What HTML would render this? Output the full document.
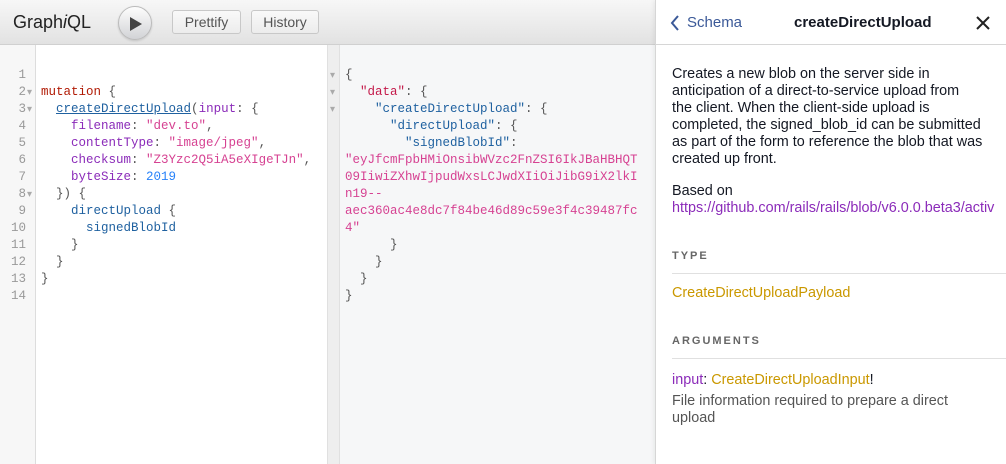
<!DOCTYPE html>
<html><head><meta charset="utf-8"><style>
*{margin:0;padding:0;box-sizing:border-box}
body{width:1006px;height:464px;overflow:hidden;background:#fff;font-family:"Liberation Sans",sans-serif;position:relative}
.top{position:absolute;left:0;top:0;width:655px;height:45px;background:linear-gradient(#f7f7f7,#e2e2e2);border-bottom:1px solid #d0d0d0}
.logo{position:absolute;left:13px;top:12px;font-size:18px;color:#222}
.run{position:absolute;left:118px;top:6px;width:34px;height:34px;border-radius:50%;background:linear-gradient(#fdfdfd,#d2d3d6);border:1px solid #bbb;box-shadow:0 1px 2px rgba(0,0,0,.15)}
.run svg{position:absolute;left:10px;top:9px}
.btn{position:absolute;top:10px;height:24px;border:1px solid #c8c8c8;border-radius:3px;background:linear-gradient(#f9f9f9,#ececec);font-size:14px;color:#555;line-height:22px;text-align:center}
.gut{position:absolute;left:0;top:45px;width:36px;height:419px;background:#f7f7f7;border-right:1px solid #ddd}
.ed{position:absolute;left:36px;top:45px;width:291px;height:419px;background:#fff}
.div{position:absolute;left:327px;top:45px;width:13px;height:419px;background:#eeeeee;border-left:1px solid #e0e0e0;border-right:1px solid #e0e0e0}
.res{position:absolute;left:340px;top:45px;width:315px;height:419px;background:#f6f7f8}
.code{position:absolute;font-family:"Liberation Mono",monospace;font-size:12.5px;line-height:17px;white-space:pre;color:#555}
.ln{color:#999;text-align:right;width:24px}
.k{color:#b11a04}.f{color:#1f61a0}.a{color:#8b2bb9}.s{color:#d64292}.n{color:#2882f9}.d{color:#1f61a0}
.u{text-decoration:underline}
.fold{position:absolute;font-size:10px;line-height:17px;color:#aaa;white-space:pre}
.docs{position:absolute;left:655px;top:0;width:351px;height:464px;background:#fff;border-left:1px solid #d6d6d6;box-shadow:-2px 0 4px rgba(0,0,0,.05)}
.dh{height:45px;border-bottom:1px solid #d6d6d6;position:relative}
.p{position:absolute;left:16px;font-size:14.4px;line-height:17px;color:#141823;white-space:nowrap}
.sec{position:absolute;left:16px;font-size:11px;font-weight:bold;letter-spacing:2px;color:#666}
.hr{position:absolute;left:16px;right:0;height:1px;background:#e0e0e0}
</style></head><body>
<div class="top">
<div class="logo">Graph<i>i</i>QL</div>
<div class="run"><svg width="14" height="16"><path d="M1 1 L13 8 L1 15Z" fill="#444"/></svg></div>
<div class="btn" style="left:172px;width:69px">Prettify</div>
<div class="btn" style="left:251px;width:68px">History</div>
</div>
<div class="gut"></div><div class="ed"></div><div class="div"></div><div class="res"></div>
<div class="code ln" style="left:2px;top:67px">1
2
3
4
5
6
7
8
9
10
11
12
13
14</div>
<div class="fold" style="left:27px;top:67px">
▾
▾




▾</div>
<div class="code" style="left:41px;top:67px">
<span class="k">mutation</span> {
  <span class="f u">createDirectUpload</span>(<span class="a">input</span>: {
    <span class="a">filename</span>: <span class="s">"dev.to"</span>,
    <span class="a">contentType</span>: <span class="s">"image/jpeg"</span>,
    <span class="a">checksum</span>: <span class="s">"Z3Yzc2Q5iA5eXIgeTJn"</span>,
    <span class="a">byteSize</span>: <span class="n">2019</span>
  }) {
    <span class="d">directUpload</span> {
      <span class="d">signedBlobId</span>
    }
  }
}
</div>
<div class="fold" style="left:330px;top:67px">▾
▾
▾</div>
<div class="code" style="left:345px;top:67px">{
  <span class="k" style="color:#c41a4a">"data"</span>: {
    <span class="f">"createDirectUpload"</span>: {
      <span class="f">"directUpload"</span>: {
        <span class="f">"signedBlobId"</span>:
<span class="s">"eyJfcmFpbHMiOnsibWVzc2FnZSI6IkJBaHBHQT
09IiwiZXhwIjpudWxsLCJwdXIiOiJibG9iX2lkI
n19--
aec360ac4e8dc7f84be46d89c59e3f4c39487fc
4"</span>
      }
    }
  }
}</div>
<div class="docs">
<div class="dh">
<svg style="position:absolute;left:14px;top:15px" width="10" height="16"><path d="M8 1 L2 8 L8 15" stroke="#3b5998" stroke-width="2" fill="none"/></svg>
<div style="position:absolute;left:31px;top:14px;font-size:15px;color:#3b5998">Schema</div>
<div style="position:absolute;left:138px;top:14px;font-size:15px;font-weight:bold;color:#141823">createDirectUpload</div>
<svg style="position:absolute;left:320px;top:16px" width="14" height="14"><path d="M1 1L13 13M13 1L1 13" stroke="#222" stroke-width="2"/></svg>
</div>
<div class="p" style="top:66px">Creates a new blob on the server side in<br>anticipation of a direct-to-service upload from<br>the client. When the client-side upload is<br>completed, the signed_blob_id can be submitted<br>as part of the form to reference the blob that was<br>created up front.</div>
<div class="p" style="top:183px">Based on</div>
<div class="p" style="top:200px;color:#8b2bb9">https://github.com/rails/rails/blob/v6.0.0.beta3/activ</div>
<div class="sec" style="top:250px">TYPE</div>
<div class="hr" style="top:273px"></div>
<div class="p" style="top:285px;color:#ca9800">CreateDirectUploadPayload</div>
<div class="sec" style="top:335px">ARGUMENTS</div>
<div class="hr" style="top:358px"></div>
<div class="p" style="top:372px"><span style="color:#8b2bb9">input</span>: <span style="color:#ca9800">CreateDirectUploadInput</span>!</div>
<div class="p" style="top:393px;color:#555">File information required to prepare a direct<br>upload</div>
</div>
</body></html>
